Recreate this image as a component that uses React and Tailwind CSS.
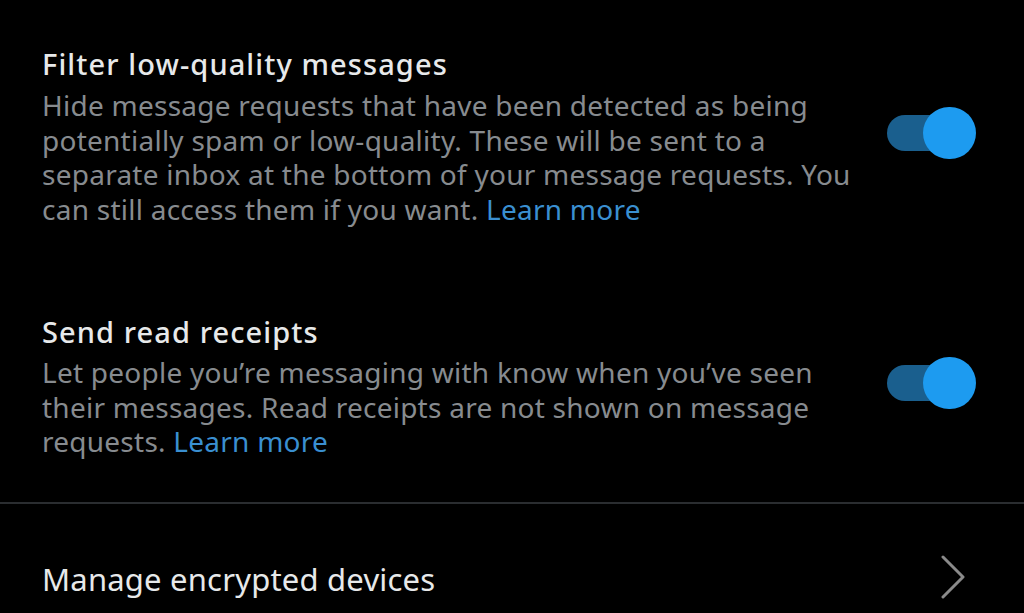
import React from "react";

function Toggle() {
  return (
    <div className="relative w-[90px] h-[52px] shrink-0 -mt-[8px]">
      <div className="absolute left-0 top-[8px] w-[64px] h-[36px] rounded-full bg-[#1a5f8e]" />
      <div className="absolute left-[36px] top-0 w-[53px] h-[52px] rounded-full bg-[#1d9bf0]" />
    </div>
  );
}

export default function App() {
  const font = { fontFamily: '"Noto Sans", "Open Sans", sans-serif' };
  return (
    <div className="w-[1024px] h-[613px] bg-black overflow-hidden" style={font}>
      <div className="flex items-center justify-between pl-[42px] pr-[47px] pt-[47px]">
        <div>
          <div className="text-[29px] leading-[34px] font-medium tracking-[1.1px] text-[#e7e9ea]">Filter low-quality messages</div>
          <div className="mt-[7px] text-[28px] tracking-[0.25px] leading-[34.5px] text-[#878b8f]">
            Hide message requests that have been detected as being<br />
            potentially spam or low-quality. These will be sent to a<br />
            separate inbox at the bottom of your message requests. You<br />
            can still access them if you want. <span className="text-[#3a8fd0]">Learn more</span>
          </div>
        </div>
        <Toggle />
      </div>

      <div className="flex items-center justify-between pl-[42px] pr-[47px] mt-[89px]">
        <div>
          <div className="text-[29px] leading-[34px] font-medium tracking-[1.1px] text-[#e7e9ea]">Send read receipts</div>
          <div className="mt-[6px] text-[28px] tracking-[0.25px] leading-[34.5px] text-[#878b8f]">
            Let people you’re messaging with know when you’ve seen<br />
            their messages. Read receipts are not shown on message<br />
            requests. <span className="text-[#3a8fd0]">Learn more</span>
          </div>
        </div>
        <Toggle />
      </div>

      <div className="mt-[43px] h-[2px] bg-[#2a2d30]" />

      <div className="flex items-center justify-between pl-[42px] pr-[58px] h-[150px] -mt-[1px]">
        <div className="text-[31px] leading-[36px] tracking-[0.2px] text-[#e7e9ea] mt-[2px]">Manage encrypted devices</div>
        <svg width="26" height="44" viewBox="0 0 26 44" fill="none" className="-mt-[2px]">
          <path d="M3 2 L23 22 L3 42" stroke="#8a8a8a" strokeWidth="3" strokeLinecap="round" strokeLinejoin="round" />
        </svg>
      </div>
    </div>
  );
}
